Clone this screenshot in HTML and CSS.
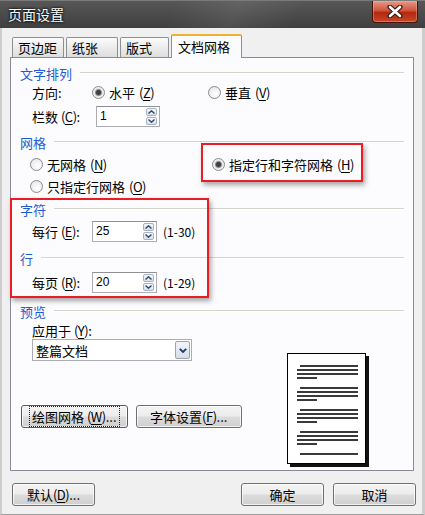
FILE: index.html
```html
<!DOCTYPE html>
<html lang="zh-CN">
<head>
    <meta charset="UTF-8">
    <meta name="viewport" content="width=device-width, initial-scale=1.0">
    <title>页面设置</title>
    <link rel="stylesheet" href="styles.css">
</head>
<body>
    <div class="window">
        <div class="titlebar">
            <span class="title">页面设置</span>
            <div class="close">
                <svg width="16" height="13" viewBox="0 0 16 13">
                    <path d="M3 2 L13 11 M13 2 L3 11" stroke="#3a1a14" stroke-width="5" stroke-linecap="round"/>
                    <path d="M3 2 L13 11 M13 2 L3 11" stroke="#fff" stroke-width="2.6" stroke-linecap="round"/>
                </svg>
            </div>
        </div>
        <div class="content">
            <div class="tabs">
                <div class="tab w52">页边距</div>
                <div class="tab w52">纸张</div>
                <div class="tab w49">版式</div>
                <div class="tab active">文档网格</div>
            </div>
            <div class="panel">
                <div class="group">文字排列</div>
                <div class="row gap1">
                    <span class="lbl w60">方向:</span>
                    <span class="radio w116"><i class="dot on"></i>水平 <span class="key">(<u>Z</u>)</span></span>
                    <span class="radio"><i class="dot"></i>垂直 <span class="key">(<u>V</u>)</span></span>
                </div>
                <div class="row tall gap5">
                    <span class="lbl w64">栏数 <span class="key">(<u>C</u>)</span>:</span>
                    <div class="spin w64">
                        <span class="val">1</span>
                        <span class="arrows">
                            <i class="arr"><svg width="7" height="4" viewBox="0 0 7 4"><path d="M0.5 3.5 L3.5 0.8 L6.5 3.5" fill="none" stroke="#2d4a6e" stroke-width="1.4"/></svg></i>
                            <i class="arr"><svg width="7" height="4" viewBox="0 0 7 4"><path d="M0.5 0.5 L3.5 3.2 L6.5 0.5" fill="none" stroke="#2d4a6e" stroke-width="1.4"/></svg></i>
                        </span>
                    </div>
                </div>
                <div class="group gap6">网格</div>
                <div class="row grid-row gap4">
                    <span class="radio w182"><i class="dot"></i>无网格 <span class="key">(<u>N</u>)</span></span>
                    <span class="radio"><i class="dot on"></i>指定行和字符网格 <span class="key">(<u>H</u>)</span></span>
                </div>
                <div class="row grid-row gap4">
                    <span class="radio"><i class="dot"></i>只指定行网格 <span class="key">(<u>O</u>)</span></span>
                </div>
                <div class="group gap5">字符</div>
                <div class="row tall gap3">
                    <span class="lbl w60">每行 <span class="key">(<u>E</u>)</span>:</span>
                    <div class="spin w65">
                        <span class="val">25</span>
                        <span class="arrows">
                            <i class="arr"><svg width="7" height="4" viewBox="0 0 7 4"><path d="M0.5 3.5 L3.5 0.8 L6.5 3.5" fill="none" stroke="#2d4a6e" stroke-width="1.4"/></svg></i>
                            <i class="arr"><svg width="7" height="4" viewBox="0 0 7 4"><path d="M0.5 0.5 L3.5 3.2 L6.5 0.5" fill="none" stroke="#2d4a6e" stroke-width="1.4"/></svg></i>
                        </span>
                    </div>
                    <span class="range">(1-30)</span>
                </div>
                <div class="group gap7">行</div>
                <div class="row tall gap5">
                    <span class="lbl w60">每页 <span class="key">(<u>R</u>)</span>:</span>
                    <div class="spin w65">
                        <span class="val">20</span>
                        <span class="arrows">
                            <i class="arr"><svg width="7" height="4" viewBox="0 0 7 4"><path d="M0.5 3.5 L3.5 0.8 L6.5 3.5" fill="none" stroke="#2d4a6e" stroke-width="1.4"/></svg></i>
                            <i class="arr"><svg width="7" height="4" viewBox="0 0 7 4"><path d="M0.5 0.5 L3.5 3.2 L6.5 0.5" fill="none" stroke="#2d4a6e" stroke-width="1.4"/></svg></i>
                        </span>
                    </div>
                    <span class="range">(1-29)</span>
                </div>
                <div class="group gap9">预览</div>
                <div class="preview-row">
                    <div class="preview-left">
                        <div class="apply">应用于 <span class="key">(<u>Y</u>)</span>:</div>
                        <div class="select">
                            <span>整篇文档</span>
                            <span class="drop"><svg width="8" height="5" viewBox="0 0 8 5"><path d="M0.8 0.8 L4 4 L7.2 0.8" fill="none" stroke="#1f3b66" stroke-width="1.8"/></svg></span>
                        </div>
                        <div class="btn-row">
                            <div class="btn focus"><span class="focus-ring">绘图网格 <span class="key">(<u>W</u>)</span>...</span></div>
                            <div class="btn">字体设置 <span class="key">(<u>F</u>)</span>...</div>
                        </div>
                    </div>
                    <div class="page">
                        <div class="para"><i class="ln first"></i><i class="ln"></i><i class="ln"></i><i class="ln short"></i></div>
                        <div class="para"><i class="ln first"></i><i class="ln"></i><i class="ln"></i><i class="ln short"></i></div>
                        <div class="para"><i class="ln first"></i><i class="ln"></i><i class="ln"></i><i class="ln short"></i></div>
                        <div class="para"><i class="ln first"></i><i class="ln"></i><i class="ln"></i><i class="ln short"></i></div>
                        <div class="para"><i class="ln first"></i></div>
                    </div>
                </div>
            </div>
            <div class="footer">
                <div class="btn wide">默认 <span class="key">(<u>D</u>)</span>...</div>
                <div class="footer-right">
                    <div class="btn wide">确定</div>
                    <div class="btn wide">取消</div>
                </div>
            </div>
        </div>

        <!-- red annotation boxes drawn over the dialog -->
        <div class="mark mark-grid"></div>
        <div class="mark mark-rows"></div>
    </div>
</body>
</html>
```

FILE: styles.css
```css
* {
    box-sizing: border-box;
}
body {
    margin: 0;
    font-family: "Noto Sans CJK SC", "Noto Sans", sans-serif;
    font-size: 13px;
    color: #000;
    background: #fff;
}
.window {
    position: relative;
    width: 425px;
    height: 515px;
    background: #f0f0f0;
    overflow: hidden;
}

/* title bar */
.titlebar {
    height: 28px;
    display: flex;
    justify-content: space-between;
    padding-left: 8px;
    background:
        linear-gradient(115deg, rgba(255,255,255,0) 40%, rgba(255,255,255,0.08) 55%, rgba(255,255,255,0) 70%),
        linear-gradient(#575757, #4b4b4b 50%, #3f3f3f);
    border-top: 1px solid #7a7a7a;
}
.title {
    color: #fff;
    font-size: 14px;
    line-height: 26px;
    text-shadow: 0 0 3px #000, 0 0 2px #000;
}
.close {
    width: 46px;
    height: 22px;
    margin-right: 7px;
    display: flex;
    align-items: center;
    justify-content: center;
    border: 1px solid #4d1208;
    border-top: none;
    border-radius: 0 0 4px 4px;
    background: linear-gradient(#e49a88, #d0563e 45%, #b3290f 55%, #c5482a);
    box-shadow: inset 0 0 0 1px rgba(255,200,180,0.35);
}

/* dialog body */
.content {
    height: 487px;
    padding: 6px 6px 0 8px;
    border-left: 2px solid #cdcdcd;
    border-right: 3px solid #cdcdcd;
    border-bottom: 1px solid #9c9c9c;
}
.tabs {
    display: flex;
    align-items: flex-end;
    gap: 2px;
    height: 23px;
    padding-left: 2px;
}
.tab {
    height: 20px;
    padding-left: 5px;
    line-height: 19px;
    border: 1px solid #8e8f8f;
    border-bottom: none;
    border-radius: 2px 2px 0 0;
    background: linear-gradient(#fbfbfb, #ececec 50%, #dedede);
}
.w52 { width: 52px; }
.w49 { width: 49px; }
.tab.active {
    position: relative;
    z-index: 1;
    width: 71px;
    height: 24px;
    margin-bottom: -1px;
    padding-left: 6px;
    line-height: 22px;
    background: #fcfcfe;
    border-top: 2px solid #f0b030;
}

.panel {
    width: 404px;
    height: 414px;
    padding: 6px 9px 0 9px;
    border: 1px solid #898c95;
    background: #fcfcfe;
}
.group {
    display: flex;
    align-items: center;
    height: 18px;
    color: #1c5bd0;
}
.group::after {
    content: "";
    flex: 1;
    margin-left: 8px;
    border-top: 1px solid #d6d3cc;
    border-bottom: 1px solid #fff;
}

.row {
    display: flex;
    align-items: center;
    height: 18px;
    padding-left: 12px;
}
.row.tall {
    height: 21px;
}
.grid-row {
    padding-left: 10px;
}
.lbl {
    flex-shrink: 0;
}
.w60 { width: 60px; }
.w64 { width: 64px; }
.w65 { width: 65px; }
.w116 { width: 116px; }
.w182 { width: 182px; }
.key {
    letter-spacing: -0.5px;
}
.key u {
    text-underline-offset: 2px;
}

.radio {
    display: flex;
    align-items: center;
    gap: 4px;
    flex-shrink: 0;
}
.dot {
    width: 13px;
    height: 13px;
    border-radius: 50%;
    border: 1px solid #8a8a8a;
    background: radial-gradient(circle at 60% 65%, #fff, #e2e2e2);
}
.dot.on {
    background: radial-gradient(circle, #3f3f3f 0 2px, #8c8c8c 3px, #e6e6e6 4px, #fafafa 6px);
}

.spin {
    display: flex;
    height: 21px;
    border: 1px solid #abadb3;
    border-top-color: #8e9096;
    background: #fff;
}
.val {
    flex: 1;
    padding-left: 3px;
    font-family: "Liberation Sans", Arial, sans-serif;
    font-size: 12px;
    line-height: 19px;
}
.arrows {
    display: flex;
    flex-direction: column;
    gap: 1px;
    width: 13px;
    padding: 1px 2px 1px 0;
}
.arr {
    flex: 1;
    display: flex;
    align-items: center;
    justify-content: center;
    border: 1px solid #a6b2c2;
    border-radius: 2px;
    background: linear-gradient(#f6f8fb, #d9e0ea);
}
.range {
    margin-left: 6px;
    font-size: 12px;
}

/* preview area */
.preview-row {
    display: flex;
    margin-top: 2px;
}
.preview-left {
    width: 222px;
    display: flex;
    flex-direction: column;
}
.apply {
    height: 16px;
    margin-top: 1px;
    padding-left: 12px;
    line-height: 16px;
}
.select {
    display: flex;
    align-items: center;
    width: 160px;
    height: 22px;
    margin-left: 12px;
    padding: 0 1px 0 3px;
    border: 1px solid #abadb3;
    background: #fff;
}
.drop {
    display: flex;
    align-items: center;
    justify-content: center;
    width: 15px;
    height: 18px;
    margin-left: auto;
    border: 1px solid #9aa4b2;
    border-radius: 2px;
    background: linear-gradient(#f3f5f8, #d6dce6);
}
.btn-row {
    display: flex;
    gap: 8px;
    margin-top: 44px;
    padding-left: 1px;
}
.btn {
    display: flex;
    align-items: center;
    justify-content: center;
    width: 107px;
    height: 23px;
    border: 1px solid #707070;
    border-radius: 3px;
    background: linear-gradient(#f4f4f4, #ececec 48%, #dcdcdc 52%, #cfcfcf);
    box-shadow: inset 0 0 0 1px rgba(255,255,255,0.7);
}
.btn.focus {
    border-color: #3c5f86;
}
.focus-ring {
    padding: 0 2px;
    border: 1px dotted #222;
}
.page {
    width: 79px;
    height: 111px;
    margin: 31px 0 0 45px;
    padding: 11px 0 0 9px;
    border: 1px solid #000;
    background: #fff;
    box-shadow: 3px 3px 0 #111;
}
.para {
    display: flex;
    flex-direction: column;
    gap: 2px;
    margin-bottom: 8px;
}
.ln {
    width: 61px;
    height: 2px;
    background: #3a3a3a;
}
.ln.first {
    width: 58px;
    margin-left: 3px;
}
.ln.short {
    width: 20px;
}

/* bottom buttons */
.footer {
    display: flex;
    justify-content: space-between;
    margin-top: 12px;
    padding-left: 2px;
}
.footer-right {
    display: flex;
    gap: 9px;
}
.btn.wide {
    width: 83px;
}

/* annotation marks */
.mark {
    position: absolute;
    border: 2px solid #ec1c24;
    box-shadow: 2px 3px 5px rgba(0,0,0,0.35);
}
.mark-grid {
    left: 201px;
    top: 143px;
    width: 162px;
    height: 39px;
}
.mark-rows {
    left: 10px;
    top: 198px;
    width: 199px;
    height: 100px;
}

/* vertical spacing between rows */
.gap1 { margin-top: 1px; }
.gap3 { margin-top: 3px; }
.gap4 { margin-top: 4px; }
.gap5 { margin-top: 5px; }
.gap6 { margin-top: 6px; }
.gap7 { margin-top: 7px; }
.gap9 { margin-top: 9px; }
```
